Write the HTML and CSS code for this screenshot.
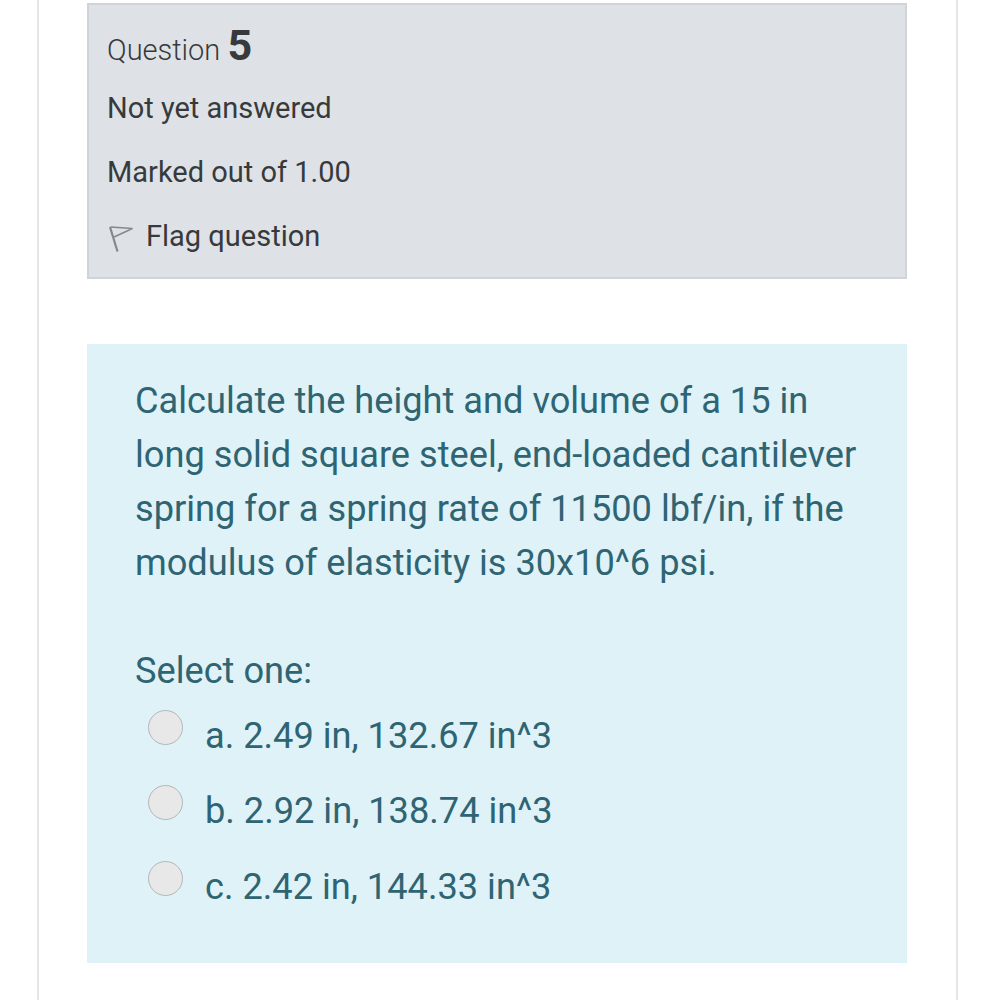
FILE: index.html
```html
<!DOCTYPE html>
<html lang="en">
<head>
  <meta charset="UTF-8" />
  <meta name="viewport" content="width=device-width, initial-scale=1.0"/>
  <title>Question 5</title>
  <link rel="stylesheet" href="styles.css">
</head>
<body>
  <div class="page">
    <div class="info">
      <h3 class="qno">Question <span class="qnum">5</span></h3>
      <div class="state">Not yet answered</div>
      <div class="grade">Marked out of 1.00</div>
      <div class="flag">
        <svg class="flag-icon" width="27" height="28" viewBox="0 0 27 28" aria-hidden="true">
          <path d="M3 3 L10.5 27.5" stroke="#85888b" stroke-width="2.2" fill="none"/>
          <path d="M3.5 3 L25.5 4.5 L7 13" stroke="#85888b" stroke-width="1.5" fill="none"/>
        </svg>
        <span>Flag question</span>
      </div>
    </div>

    <div class="content">
      <p class="qtext">Calculate the height and volume of a 15 in long solid square steel, end-loaded cantilever spring for a spring rate of 11500 lbf/in, if the modulus of elasticity is 30x10^6 psi.</p>
      <div class="prompt">Select one:</div>
      <div class="answers">
        <div class="answer"><span class="radio"></span><span>a. 2.49 in, 132.67 in^3</span></div>
        <div class="answer"><span class="radio"></span><span>b. 2.92 in, 138.74 in^3</span></div>
        <div class="answer"><span class="radio"></span><span>c. 2.42 in, 144.33 in^3</span></div>
      </div>
    </div>
  </div>
</body>
</html>
```

FILE: styles.css
```css
html, body {
  height: 100%;
}

body {
  margin: 0;
  background: #fff;
  font-family: Roboto, "Liberation Sans", sans-serif;
  overflow: hidden;
}

.page {
  box-sizing: border-box;
  width: 921px;
  height: 1000px;
  margin-left: 37px;
  padding: 3px 49px 0 48px;
  border-left: 2px solid #e6e6e6;
  border-right: 2px solid #e6e6e6;
}

.info {
  box-sizing: border-box;
  height: 276px;
  padding: 19px 18px 0 18px;
  background: #dee2e6;
  border: 2px solid #cfd4d8;
  color: #373a3c;
  font-size: 29px;
}

.qno {
  margin: 0;
  height: 52px;
  font-size: 29px;
  font-weight: 300;
  line-height: 42px;
}

.qnum {
  font-size: 43px;
  font-weight: 700;
}

.state,
.grade,
.flag {
  height: 64px;
  line-height: 64px;
}

.flag {
  display: flex;
  align-items: center;
  gap: 12px;
}

.flag-icon {
  margin-top: 4px;
}

.content {
  box-sizing: border-box;
  height: 619px;
  margin-top: 65px;
  padding: 30px 48px 0 48px;
  background: #def2f8;
  color: #2f6473;
  font-size: 36.2px;
}

.qtext {
  margin: 0;
  line-height: 54px;
}

.prompt {
  margin-top: 54px;
  line-height: 54px;
}

.answers {
  margin-top: 11px;
}

.answer {
  display: flex;
  align-items: flex-start;
  gap: 22px;
  height: 75.3px;
  padding-left: 13px;
  line-height: 54px;
}

.radio {
  box-sizing: border-box;
  width: 35px;
  height: 35px;
  margin-top: 1px;
  border: 1.5px solid #b4b7b9;
  border-radius: 50%;
  background: #e8e8e8;
}
```
